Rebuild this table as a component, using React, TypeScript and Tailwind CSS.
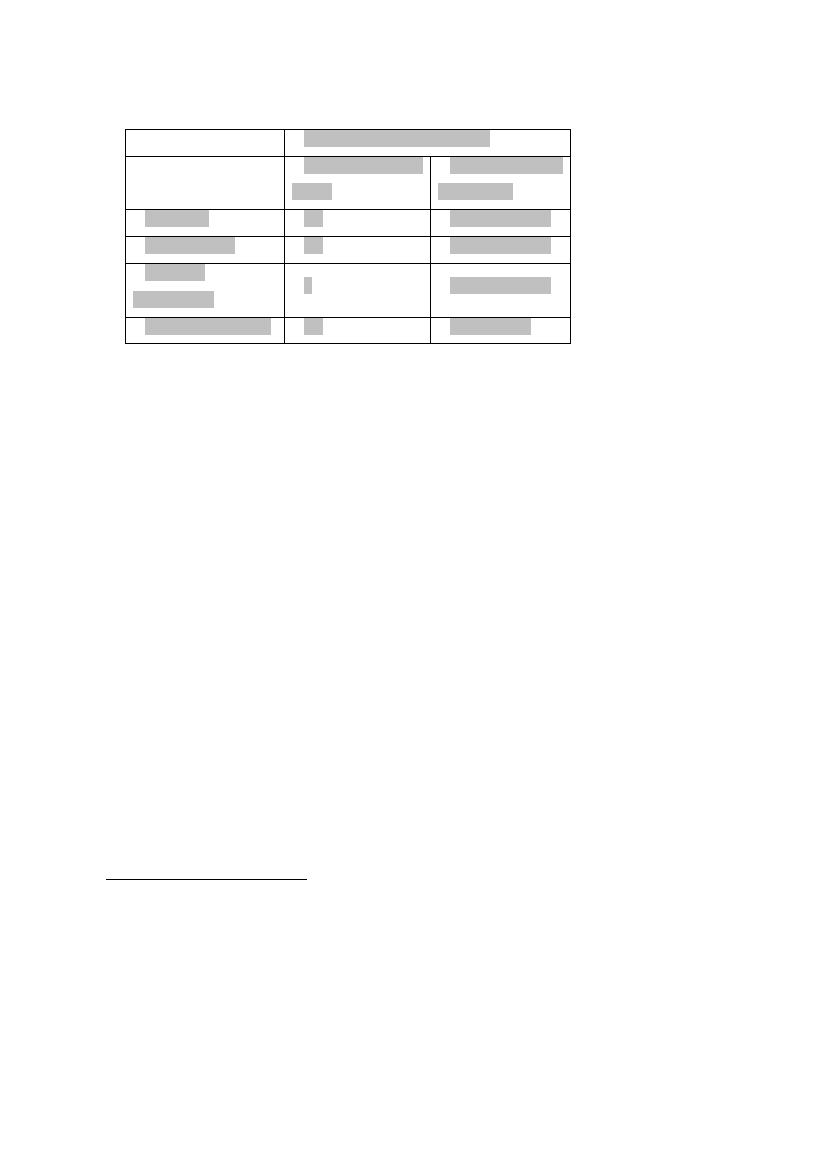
import React from 'react';

type Line = { w: number; indent?: boolean };

// one cell: a stack of "lines" of redacted text, first line indented
const Cell = ({ lines, className = '', top = 0, step = 26 }: { lines: Line[]; className?: string; top?: number; step?: number }) => (
  <div className={`px-[7px] ${className}`} style={{ paddingTop: top }}>
    {lines.map((l, i) => (
      <div key={i} className="flex" style={{ height: i === lines.length - 1 ? 17 : step }}>
        <span
          className={`block h-[17px] bg-[#c0c0c0] ${l.indent ? 'ml-[12px]' : ''}`}
          style={{ width: l.w }}
        />
      </div>
    ))}
  </div>
);

export default function App() {
  return (
    <div className="min-h-[1169px] w-full bg-white pt-[129px]" style={{ fontFamily: '"Liberation Serif", serif' }}>
      <div className="ml-[125px] w-[446px] border border-black">
        {/* header row */}
        <div className="flex h-[27px] border-b border-black">
          <div className="w-[159px] border-r border-black" />
          <Cell className="flex-1" lines={[{ w: 186, indent: true }]} />
        </div>
        <div className="flex h-[53px] border-b border-black">
          <div className="w-[159px] border-r border-black" />
          <Cell className="w-[146px] border-r border-black" lines={[{ w: 119, indent: true }, { w: 40 }]} />
          <Cell className="flex-1" lines={[{ w: 113, indent: true }, { w: 75 }]} />
        </div>
        {/* body rows */}
        <div className="flex h-[27px] border-b border-black">
          <Cell className="w-[159px] border-r border-black" lines={[{ w: 64, indent: true }]} />
          <Cell className="w-[146px] border-r border-black" lines={[{ w: 19, indent: true }]} />
          <Cell className="flex-1" lines={[{ w: 101, indent: true }]} />
        </div>
        <div className="flex h-[27px] border-b border-black">
          <Cell className="w-[159px] border-r border-black" lines={[{ w: 90, indent: true }]} />
          <Cell className="w-[146px] border-r border-black" lines={[{ w: 19, indent: true }]} />
          <Cell className="flex-1" lines={[{ w: 101, indent: true }]} />
        </div>
        <div className="flex h-[54px] border-b border-black">
          <Cell className="w-[159px] border-r border-black" step={27} lines={[{ w: 60, indent: true }, { w: 81 }]} />
          <Cell className="w-[146px] border-r border-black" top={13} lines={[{ w: 8, indent: true }]} />
          <Cell className="flex-1" top={13} lines={[{ w: 101, indent: true }]} />
        </div>
        <div className="flex h-[25px]">
          <Cell className="w-[159px] border-r border-black" lines={[{ w: 126, indent: true }]} />
          <Cell className="w-[146px] border-r border-black" lines={[{ w: 19, indent: true }]} />
          <Cell className="flex-1" lines={[{ w: 81, indent: true }]} />
        </div>
      </div>

      {/* footnote separator */}
      <div className="ml-[106px] mt-[535px] h-px w-[201px] bg-black" />
    </div>
  );
}
